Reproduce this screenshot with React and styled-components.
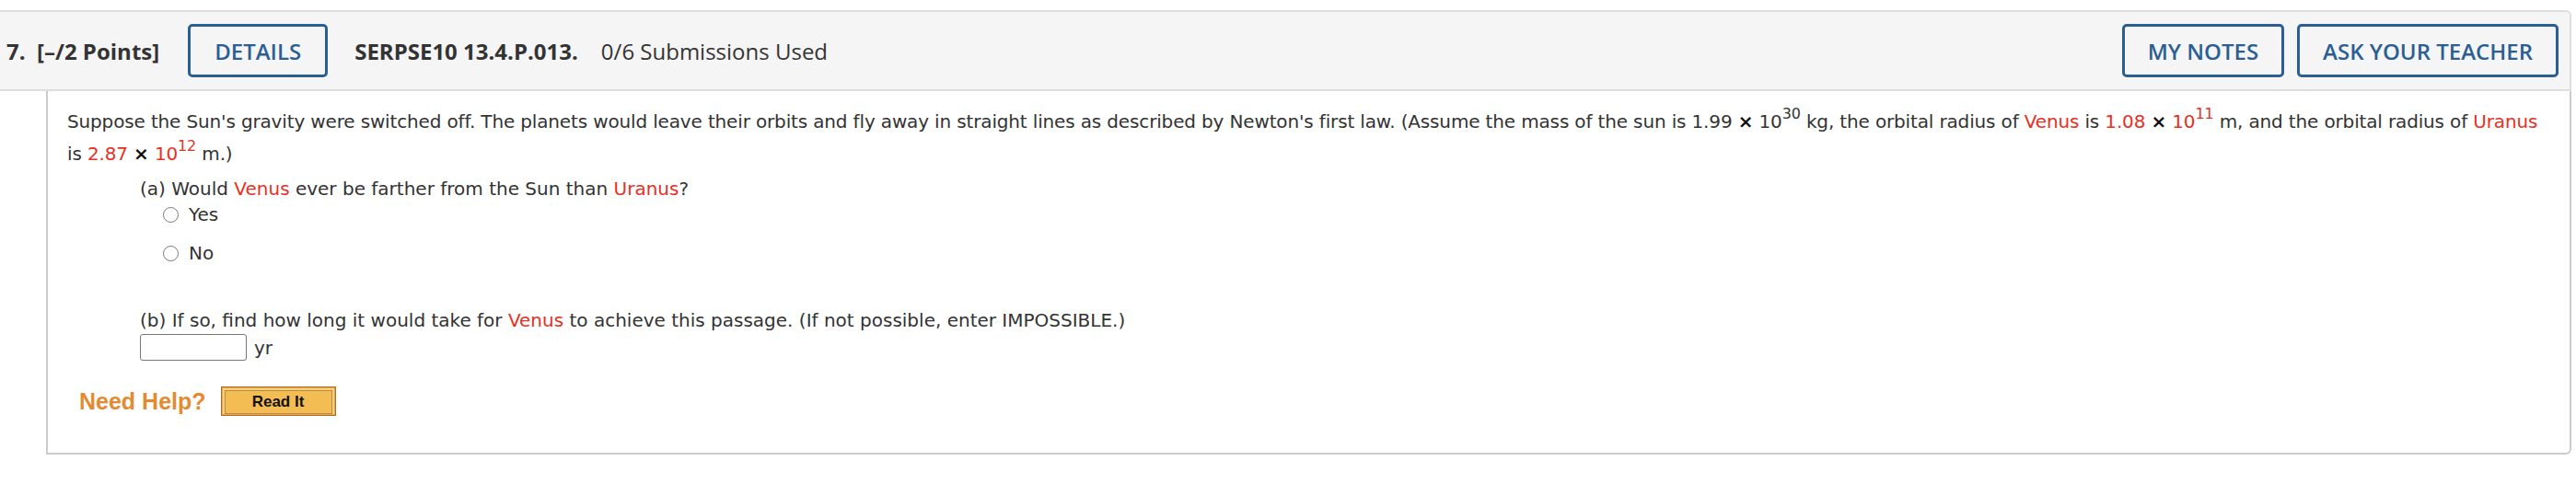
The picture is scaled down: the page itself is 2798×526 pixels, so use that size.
import React from 'react'
import styled, { createGlobalStyle } from 'styled-components'

const GlobalStyle = createGlobalStyle`
  html, body {
    margin: 0;
    padding: 0;
    background: #fff;
  }
`;

const Page = styled.div`
  padding: 11px 5px 0 0;
`;

const Header = styled.div`
  height: 84px;
  display: flex;
  align-items: center;
  padding: 0 12px 0 7px;
  background: #f5f5f5;
  border: 2px solid #dedede;
  border-left: none;
  border-top-right-radius: 6px;
  font-family: "Open Sans", sans-serif;
  font-size: 24px;
  color: #333;
`;

const Points = styled.span`
  font-weight: 700;
  white-space: pre;
`;

const Code = styled.span`
  font-weight: 700;
  margin-left: 29px;
`;

const Used = styled.span`
  margin-left: 25px;
`;

const Spacer = styled.div`
  flex: 1;
`;

const HeadButton = styled.button`
  height: 58px;
  margin-left: ${(p) => p.gap || 0}px;
  padding: 0 ${(p) => p.pad || 25}px;
  background: transparent;
  border: 3px solid #2b5f94;
  border-radius: 5px;
  font-family: "Open Sans", sans-serif;
  font-size: 24px;
  font-weight: 600;
  color: #2b5f94;
`;

const Body = styled.div`
  margin-left: 50px;
  height: 377px;
  padding: 16px 28px 0 21px;
  border: 2px solid #cccccc;
  border-top: none;
  border-bottom-right-radius: 6px;
  font-family: "DejaVu Sans", Verdana, sans-serif;
  font-size: 20px;
  color: #333;
`;

const Para = styled.p`
  margin: 0;
  line-height: 35px;
  letter-spacing: -0.15px;
`;

const Red = styled.span`
  color: #e8301f;
`;

const Times = styled.span`
  color: #111;
  font-weight: 700;
`;

const Sup = styled.sup`
  font-size: 16px;
  line-height: 0;
  vertical-align: 10px;
`;

const Part = styled.div`
  margin: ${(p) => p.top}px 0 0 79px;
  line-height: 28px;
`;

const Options = styled.div`
  display: flex;
  flex-direction: column;
  gap: 14px;
  margin-left: 25px;
`;

const Option = styled.label`
  display: flex;
  align-items: center;
  gap: 11px;
  height: 28px;
`;

const Radio = styled.span`
  width: 15px;
  height: 15px;
  border: 1.5px solid #777;
  border-radius: 50%;
  background: #fff;
`;

const AnswerRow = styled.div`
  display: flex;
  align-items: center;
  gap: 8px;
  margin: 1px 0 0 79px;
`;

const Input = styled.input`
  width: 114px;
  height: 27px;
  border: 1px solid #777;
  border-radius: 3px;
  padding: 0;
  margin: 0;
`;

const HelpRow = styled.div`
  display: flex;
  align-items: center;
  gap: 16px;
  margin: 28px 0 0 13px;
`;

const NeedHelp = styled.span`
  font-family: "Liberation Sans", Arial, sans-serif;
  font-weight: 700;
  font-size: 25px;
  color: #e38b31;
`;

const ReadIt = styled.button`
  width: 125px;
  height: 32px;
  padding: 3px;
  background: #f7d27e;
  border: 1px solid #a86f2c;
  box-shadow: inset 0 0 0 1px #e9a646;
  cursor: pointer;
`;

const ReadItFace = styled.span`
  display: flex;
  align-items: center;
  justify-content: center;
  height: 100%;
  background: #f3bd54;
  border: 1px solid #b88a45;
  font-family: "Liberation Sans", Arial, sans-serif;
  font-weight: 700;
  font-size: 17px;
  color: #111;
`;

export default function App() {
  return (
    <Page>
      <GlobalStyle />
      <Header>
        <Points>{'7.  [–/2 Points]'}</Points>
        <HeadButton gap={31} pad={26}>DETAILS</HeadButton>
        <Code>SERPSE10 13.4.P.013.</Code>
        <Used>0/6 Submissions Used</Used>
        <Spacer />
        <HeadButton>MY NOTES</HeadButton>
        <HeadButton gap={14}>ASK YOUR TEACHER</HeadButton>
      </Header>
      <Body>
        <Para>
          Suppose the Sun's gravity were switched off. The planets would leave their orbits and fly away in
          straight lines as described by Newton's first law. (Assume the mass of the sun is 1.99 <Times>×</Times> 10
          <Sup>30</Sup> kg, the orbital radius of <Red>Venus</Red> is <Red>1.08</Red> <Times>×</Times>{' '}
          <Red>
            10<Sup>11</Sup>
          </Red>{' '}
          m, and the orbital radius of <Red>Uranus</Red> is <Red>2.87</Red> <Times>×</Times>{' '}
          <Red>
            10<Sup>12</Sup>
          </Red>{' '}
          m.)
        </Para>
        <Part top={6}>
          (a) Would <Red>Venus</Red> ever be farther from the Sun than <Red>Uranus</Red>?
          <Options>
            <Option>
              <Radio />
              Yes
            </Option>
            <Option>
              <Radio />
              No
            </Option>
          </Options>
        </Part>
        <Part top={45}>
          (b) If so, find how long it would take for <Red>Venus</Red> to achieve this passage. (If not possible,
          enter IMPOSSIBLE.)
        </Part>
        <AnswerRow>
          <Input type="text" />
          <span>yr</span>
        </AnswerRow>
        <HelpRow>
          <NeedHelp>Need Help?</NeedHelp>
          <ReadIt>
            <ReadItFace>Read It</ReadItFace>
          </ReadIt>
        </HelpRow>
      </Body>
    </Page>
  )
}
